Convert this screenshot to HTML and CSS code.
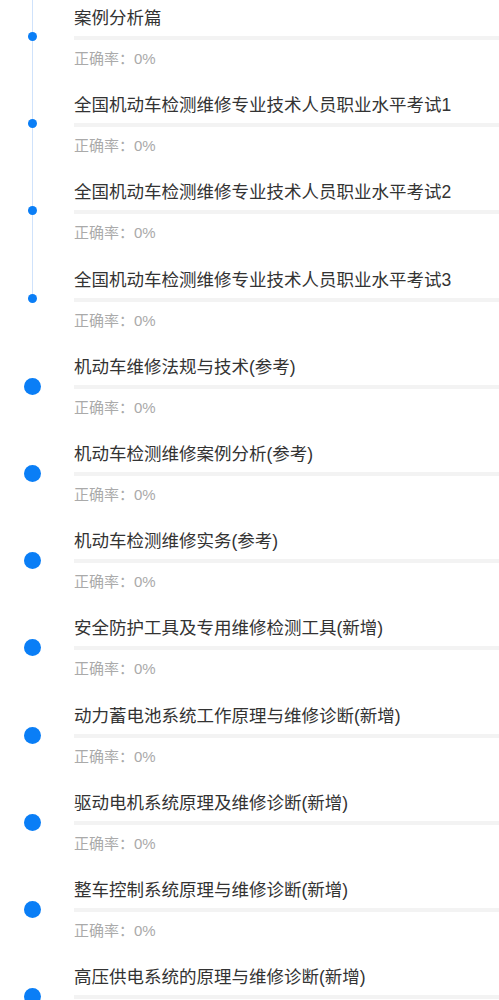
FILE: index.html
```html
<!DOCTYPE html>
<html lang="zh">
<head>
<meta charset="utf-8">
<link rel="stylesheet" href="styles.css">
</head>
<body>
<div class="list">
  <div class="item small">
    <div class="axis"><span class="seg-top"></span><span class="dot"></span><span class="seg-bottom"></span></div>
    <div class="content"><div class="title">案例分析篇</div><div class="bar"></div><div class="rate">正确率：0%</div></div>
  </div>
  <div class="item small">
    <div class="axis"><span class="seg-top"></span><span class="dot"></span><span class="seg-bottom"></span></div>
    <div class="content"><div class="title">全国机动车检测维修专业技术人员职业水平考试1</div><div class="bar"></div><div class="rate">正确率：0%</div></div>
  </div>
  <div class="item small">
    <div class="axis"><span class="seg-top"></span><span class="dot"></span><span class="seg-bottom"></span></div>
    <div class="content"><div class="title">全国机动车检测维修专业技术人员职业水平考试2</div><div class="bar"></div><div class="rate">正确率：0%</div></div>
  </div>
  <div class="item small last">
    <div class="axis"><span class="seg-top"></span><span class="dot"></span><span class="seg-bottom"></span></div>
    <div class="content"><div class="title">全国机动车检测维修专业技术人员职业水平考试3</div><div class="bar"></div><div class="rate">正确率：0%</div></div>
  </div>
  <div class="item big">
    <div class="axis"><span class="seg-top"></span><span class="dot"></span><span class="seg-bottom"></span></div>
    <div class="content"><div class="title">机动车维修法规与技术(参考)</div><div class="bar"></div><div class="rate">正确率：0%</div></div>
  </div>
  <div class="item big">
    <div class="axis"><span class="seg-top"></span><span class="dot"></span><span class="seg-bottom"></span></div>
    <div class="content"><div class="title">机动车检测维修案例分析(参考)</div><div class="bar"></div><div class="rate">正确率：0%</div></div>
  </div>
  <div class="item big">
    <div class="axis"><span class="seg-top"></span><span class="dot"></span><span class="seg-bottom"></span></div>
    <div class="content"><div class="title">机动车检测维修实务(参考)</div><div class="bar"></div><div class="rate">正确率：0%</div></div>
  </div>
  <div class="item big">
    <div class="axis"><span class="seg-top"></span><span class="dot"></span><span class="seg-bottom"></span></div>
    <div class="content"><div class="title">安全防护工具及专用维修检测工具(新增)</div><div class="bar"></div><div class="rate">正确率：0%</div></div>
  </div>
  <div class="item big">
    <div class="axis"><span class="seg-top"></span><span class="dot"></span><span class="seg-bottom"></span></div>
    <div class="content"><div class="title">动力蓄电池系统工作原理与维修诊断(新增)</div><div class="bar"></div><div class="rate">正确率：0%</div></div>
  </div>
  <div class="item big">
    <div class="axis"><span class="seg-top"></span><span class="dot"></span><span class="seg-bottom"></span></div>
    <div class="content"><div class="title">驱动电机系统原理及维修诊断(新增)</div><div class="bar"></div><div class="rate">正确率：0%</div></div>
  </div>
  <div class="item big">
    <div class="axis"><span class="seg-top"></span><span class="dot"></span><span class="seg-bottom"></span></div>
    <div class="content"><div class="title">整车控制系统原理与维修诊断(新增)</div><div class="bar"></div><div class="rate">正确率：0%</div></div>
  </div>
  <div class="item big">
    <div class="axis"><span class="seg-top"></span><span class="dot"></span><span class="seg-bottom"></span></div>
    <div class="content"><div class="title">高压供电系统的原理与维修诊断(新增)</div><div class="bar"></div><div class="rate">正确率：0%</div></div>
  </div>
</div>
</body>
</html>
```

FILE: styles.css
```css
html, body {
  margin: 0;
  padding: 0;
  background: #ffffff;
}
body {
  font-family: "Liberation Sans", "Noto Sans CJK SC", sans-serif;
  overflow: hidden;
}
.list {
  display: flex;
  flex-direction: column;
}
.item {
  display: flex;
  height: 87.2px;
}
.axis {
  width: 64px;
  flex: 0 0 64px;
  display: flex;
  flex-direction: column;
  align-items: center;
}
.seg-top, .seg-bottom {
  width: 1px;
  background: #cfe2fb;
}
.seg-bottom {
  flex: 1;
}
.dot {
  border-radius: 50%;
  background: #0a7ef6;
}
.small .seg-top {
  height: 32px;
}
.small .dot {
  width: 9px;
  height: 9px;
}
.small.last .seg-bottom,
.big .seg-top,
.big .seg-bottom {
  background: transparent;
}
.big .seg-top {
  height: 29px;
}
.big .dot {
  width: 17px;
  height: 17px;
}
.content {
  flex: 1;
  margin-left: 10px;
  padding-top: 6px;
}
.title {
  font-size: 17.5px;
  line-height: 24px;
  color: #333333;
  white-space: nowrap;
}
.bar {
  height: 4px;
  margin-top: 6px;
  background: #f3f3f3;
}
.rate {
  margin-top: 9px;
  font-size: 15px;
  line-height: 20px;
  color: #aaaaaa;
}
```
